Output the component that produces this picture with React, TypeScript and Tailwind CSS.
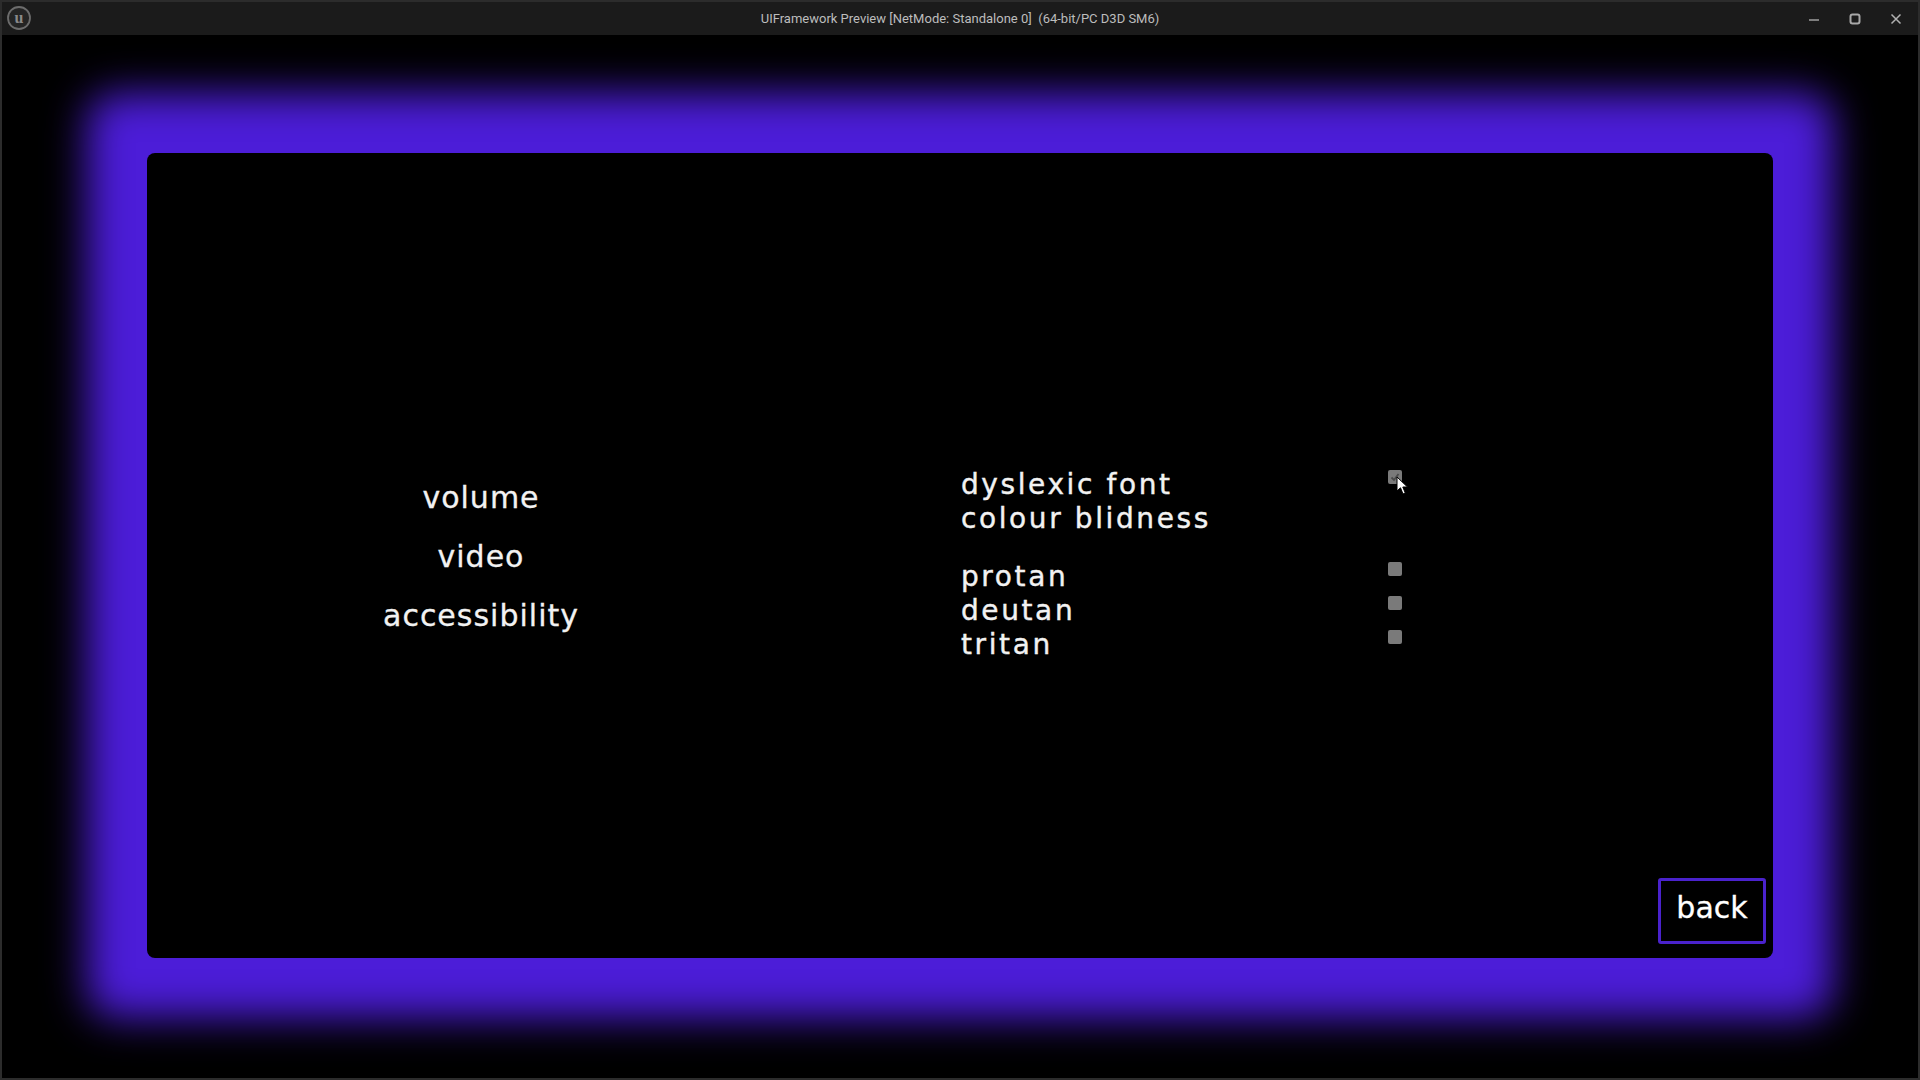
import React from 'react';

const leftItems = ['volume', 'video', 'accessibility'];

function Checkbox({ checked }: { checked?: boolean }) {
  return (
    <div className="mt-[2px] w-[14px] h-[14px] rounded-[2px] bg-[#7a7a7a] flex items-center justify-center shrink-0">
      {checked && (
        <svg width="10" height="10" viewBox="0 0 10 10">
          <path d="M1.5 5.5 L4 8 L8.5 2" stroke="#4a4a4a" strokeWidth="1.8" fill="none" />
        </svg>
      )}
    </div>
  );
}

function Cursor() {
  return (
    <svg className="absolute left-[8px] top-[8px]" width="13" height="20" viewBox="0 0 13 20">
      <path d="M1 1 L1 15 L4.5 11.8 L7 18 L9.3 17 L6.8 11 L11.5 11 Z" fill="#ffffff" stroke="#000000" strokeWidth="1" strokeLinejoin="round" />
    </svg>
  );
}

function OptionRow({ label, box, checked, cursor }: { label: string; box?: boolean; checked?: boolean; cursor?: boolean }) {
  return (
    <div className="flex items-start h-[34px]">
      <span className="w-[427px] leading-[34px] tracking-[2.6px] [-webkit-text-stroke:0.4px_#f2f2f2]">{label}</span>
      {box && (
        <div className="relative">
          <Checkbox checked={checked} />
          {cursor && <Cursor />}
        </div>
      )}
    </div>
  );
}

function TitleBar() {
  return (
    <div className="relative h-[33px] bg-[#1b1b1b] flex items-center justify-center shrink-0">
      <div className="absolute left-[4px] top-[3px]">
        <svg width="26" height="26" viewBox="0 0 26 26">
          <circle cx="13" cy="13" r="11" fill="#242424" stroke="#6c6c6c" strokeWidth="1.8" />
          <text x="13" y="18" textAnchor="middle" fontSize="16" fontWeight="bold" fontFamily="'Liberation Serif', serif" fill="#8a8a8a">u</text>
        </svg>
      </div>
      <span className="text-[13px] text-[#bdbdbd] font-['Roboto',sans-serif] mt-[1px]">
        UIFramework Preview [NetMode: Standalone 0]&nbsp; (64-bit/PC D3D SM6)
      </span>
      <div className="absolute right-[16px] top-0 h-full flex items-center gap-[29px]">
        <svg width="12" height="12" viewBox="0 0 12 12">
          <path d="M1 7 H11" stroke="#a8a8a8" strokeWidth="1.4" />
        </svg>
        <svg width="12" height="12" viewBox="0 0 12 12">
          <rect x="1.5" y="1.5" width="9" height="9" rx="2" stroke="#a8a8a8" strokeWidth="2" fill="none" />
        </svg>
        <svg width="12" height="12" viewBox="0 0 12 12">
          <path d="M1.5 1.5 L10.5 10.5 M10.5 1.5 L1.5 10.5" stroke="#b0b0b0" strokeWidth="1.5" />
        </svg>
      </div>
    </div>
  );
}

export default function App() {
  return (
    <div className="w-[1920px] h-[1080px] bg-black border-2 border-[#2c2c2c] flex flex-col overflow-hidden font-['DejaVu_Sans',sans-serif] text-[#f2f2f2]">
      <TitleBar />

      <div className="flex-1 pl-[145px] pt-[118px]">
        {/* Settings panel */}
        <div className="w-[1626px] h-[805px] bg-black rounded-[8px] shadow-[0_0_40px_60px_#4c1dd8] flex flex-col">
          <div className="flex pt-[315px]">
            {/* Categories */}
            <div className="w-[668px] flex flex-col items-center text-[30px] tracking-[1px] [-webkit-text-stroke:0.3px_#f2f2f2]">
              {leftItems.map((item) => (
                <div key={item} className="leading-[59px] h-[59px]">{item}</div>
              ))}
            </div>

            {/* Accessibility options */}
            <div className="ml-[146px] flex flex-col text-[28px]">
              <OptionRow label="dyslexic font" box checked cursor />
              <OptionRow label="colour blidness" />
              <div className="h-[24px]" />
              <OptionRow label="protan" box />
              <OptionRow label="deutan" box />
              <OptionRow label="tritan" box />
            </div>
          </div>

          <div className="mt-auto flex justify-end pr-[7px] pb-[14px]">
            <button className="w-[108px] h-[66px] border-[3px] border-[#4a22cc] rounded-[3px] bg-black text-white text-[30px] flex items-center justify-center pb-[8px] [-webkit-text-stroke:0.3px_#ffffff]">
              back
            </button>
          </div>
        </div>
      </div>
    </div>
  );
}
